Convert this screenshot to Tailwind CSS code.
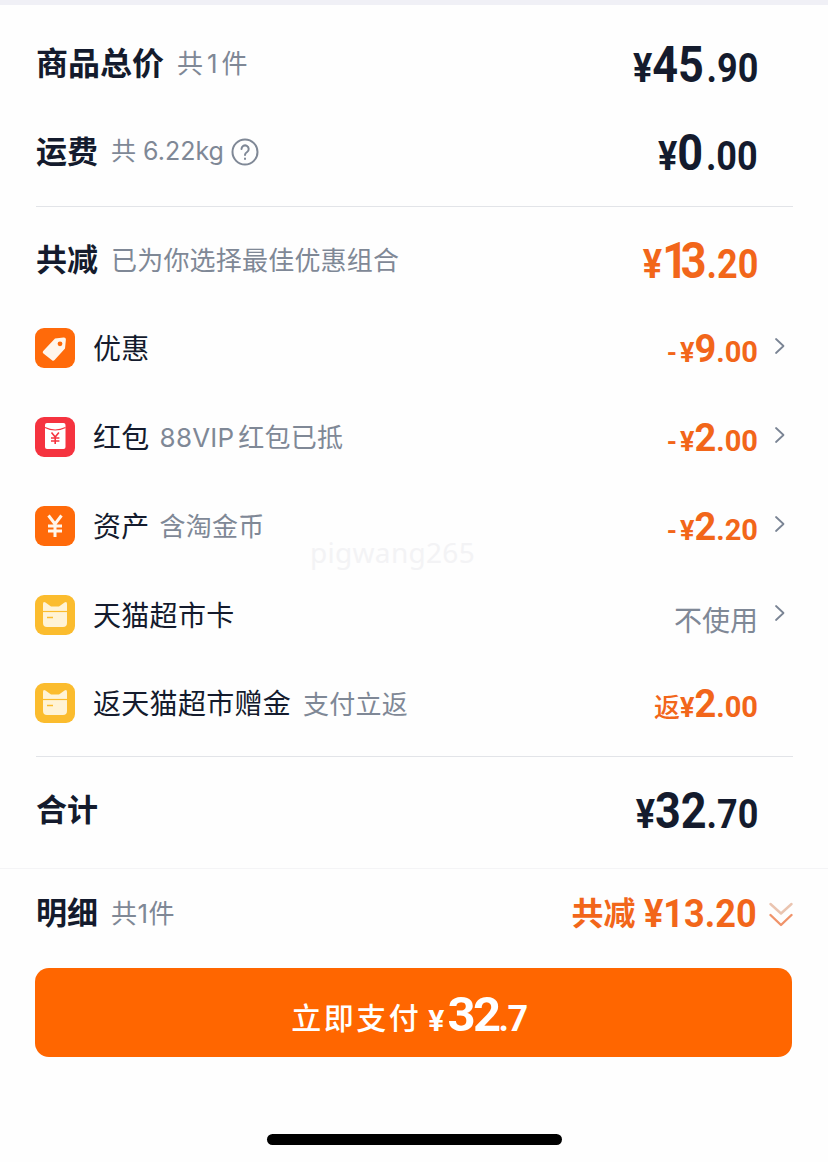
<!DOCTYPE html>
<html lang="zh">
<head>
    <meta charset="UTF-8">
    <title>订单结算</title>
    <script src="https://cdn.jsdelivr.net/npm/@tailwindcss/browser@4"></script>
</head>
<body class="bg-white font-['Inter','Noto_Sans_CJK_SC',sans-serif]">
<div class="relative w-[828px] h-[1162px] overflow-hidden bg-[#fefefe] text-[#141b2d]">
    <div class="h-[5px] bg-[#f0f0f6]"></div>

    <div class="pl-[36px] pr-[35px] pt-[16px]">
        <!-- 商品总价 -->
        <div class="flex items-center justify-between h-[88px]">
            <div class="flex items-center gap-[13px] -mt-[3px]">
                <span class="text-[32px] font-semibold">商品总价</span>
                <span class="text-[26px] text-[#7f8896]">共<span class="mx-[4px]">1</span>件</span>
            </div>
            <div class="mr-[35px] pt-[8px] flex items-baseline font-['Roboto'] font-bold origin-right scale-x-[0.9]">
                <span class="text-[40px]">¥</span><span class="text-[50px] leading-none">45</span><span class="ml-[3px] text-[40px] leading-none">.90</span>
            </div>
        </div>
        <!-- 运费 -->
        <div class="flex items-center justify-between h-[88px]">
            <div class="flex items-center gap-[13px] -mt-[2px]">
                <span class="text-[31px] font-semibold">运费</span>
                <span class="flex items-center gap-[7px] text-[25px] text-[#7f8896]">共 6.22kg
                    <svg class="w-[28px] h-[28px]" viewBox="0 0 28 28" fill="none" stroke="#7f8896" stroke-width="2" stroke-linecap="round"><circle cx="14" cy="14" r="12.500"/><path d="M10.500 11a3.600 3.600 0 1 1 5.600 3c-1.300.9-2.100 1.500-2.100 3"/><path d="M14 20.600v.3"/></svg>
                </span>
            </div>
            <div class="mr-[35px] pt-[8px] flex items-baseline font-['Roboto'] font-bold origin-right scale-x-[0.9]">
                <span class="text-[40px]">¥</span><span class="text-[50px] leading-none">0</span><span class="ml-[3px] text-[40px] leading-none">.00</span>
            </div>
        </div>

        <div class="mt-[9px] h-px bg-[#e2e4e8]"></div>

        <!-- 共减 -->
        <div class="mt-[10px] flex items-center justify-between h-[87px]">
            <div class="flex items-center gap-[13px]">
                <span class="text-[31px] font-semibold">共减</span>
                <span class="text-[26px] tracking-[0.2px] text-[#7f8896]">已为你选择最佳优惠组合</span>
            </div>
            <div class="mr-[35px] pt-[9px] flex items-baseline font-['Roboto'] font-bold text-[#f2661a] origin-right scale-x-[0.9]">
                <span class="text-[40px]">¥</span><span class="text-[50px] leading-none"><span class="tracking-[-8px]">1</span>3</span><span class="text-[40px] leading-none">.20</span>
            </div>
        </div>

        <!-- 优惠 -->
        <div class="flex items-center justify-between h-[89px]">
            <div class="flex items-center">
                <svg class="w-[40px] h-[40px] -ml-px -mt-[2px] mr-[18px]" viewBox="0 0 40 40"><rect width="40" height="40" rx="9" fill="#ff6a0a"/><path d="M20 10.500 28.600 9.500Q31 9.300 30.900 11.600L30 20.500 19.600 32Q18.400 33.300 17 32.200L8.400 25.600Q7 24.400 8.200 23Z" fill="#fff6ec"/><circle cx="25" cy="15.800" r="2.400" fill="#ff6a0a"/></svg>
                <span class="text-[28px] tracking-[0.3px]">优惠</span>
            </div>
            <div class="flex items-center text-[#f2661a]">
                <div class="pt-[6px] flex items-baseline font-['Roboto'] font-bold">
                    <span class="text-[26px] mr-[3px]">-</span><span class="text-[27px]">¥</span><span class="text-[38px] leading-none">9</span><span class="text-[29px] leading-none">.00</span>
                </div>
                <svg class="w-[12px] h-[18px] ml-[16px] mr-[7px] -mt-[6px]" viewBox="0 0 12 18" fill="none" stroke="#7a8494" stroke-width="1.800" stroke-linecap="round" stroke-linejoin="round"><path d="M2 2l7.500 7L2 16"/></svg>
            </div>
        </div>
        <!-- 红包 -->
        <div class="flex items-center justify-between h-[89px]">
            <div class="flex items-center">
                <svg class="w-[40px] h-[40px] -ml-px -mt-[2px] mr-[18px]" viewBox="0 0 40 40"><rect width="40" height="40" rx="9" fill="#f5333f"/><rect x="10" y="6" width="20.500" height="26" rx="2" fill="#fff"/><path d="M10 10.500Q20 15.500 30.500 10.500" fill="none" stroke="#f5333f" stroke-width="1.200"/><path d="M16.500 15.500l3.700 4.500 3.700-4.500M16 21h8.400M16 24h8.400M20.200 20v7" fill="none" stroke="#f5333f" stroke-width="1.600"/></svg>
                <span class="text-[28px] tracking-[0.3px]">红包</span>
                <span class="ml-[10px] text-[26px] tracking-[0.2px] text-[#7f8896]">88VIP<span class="ml-[4px]">红包已抵</span></span>
            </div>
            <div class="flex items-center text-[#f2661a]">
                <div class="pt-[6px] flex items-baseline font-['Roboto'] font-bold">
                    <span class="text-[26px] mr-[3px]">-</span><span class="text-[27px]">¥</span><span class="text-[38px] leading-none">2</span><span class="text-[29px] leading-none">.00</span>
                </div>
                <svg class="w-[12px] h-[18px] ml-[16px] mr-[7px] -mt-[6px]" viewBox="0 0 12 18" fill="none" stroke="#7a8494" stroke-width="1.800" stroke-linecap="round" stroke-linejoin="round"><path d="M2 2l7.500 7L2 16"/></svg>
            </div>
        </div>
        <!-- 资产 -->
        <div class="flex items-center justify-between h-[89px]">
            <div class="flex items-center">
                <svg class="w-[40px] h-[40px] -ml-px -mt-[2px] mr-[18px]" viewBox="0 0 40 40"><rect width="40" height="40" rx="9" fill="#ff6a0a"/><path d="M13.500 9.500 20 18l6.500-8.500M13 20h14M13 25h14M20 18v13" fill="none" stroke="#fff6ec" stroke-width="3"/></svg>
                <span class="text-[28px] tracking-[0.3px]">资产</span>
                <span class="ml-[10px] text-[26px] tracking-[0.2px] text-[#7f8896]">含淘金币</span>
            </div>
            <div class="flex items-center text-[#f2661a]">
                <div class="pt-[6px] flex items-baseline font-['Roboto'] font-bold">
                    <span class="text-[26px] mr-[3px]">-</span><span class="text-[27px]">¥</span><span class="text-[38px] leading-none">2</span><span class="text-[29px] leading-none">.20</span>
                </div>
                <svg class="w-[12px] h-[18px] ml-[16px] mr-[7px] -mt-[6px]" viewBox="0 0 12 18" fill="none" stroke="#7a8494" stroke-width="1.800" stroke-linecap="round" stroke-linejoin="round"><path d="M2 2l7.500 7L2 16"/></svg>
            </div>
        </div>
        <!-- 天猫超市卡 -->
        <div class="flex items-center justify-between h-[89px]">
            <div class="flex items-center">
                <svg class="w-[40px] h-[40px] -ml-px -mt-[2px] mr-[18px]" viewBox="0 0 40 40"><rect width="40" height="40" rx="9" fill="#fbbc2e"/><path d="M8 9Q8 6 10.500 7.500L16 11.500H24L29.500 7.500Q32 6 32 9V28Q32 32 28 32H12Q8 32 8 28Z" fill="#fff3d6"/><path d="M8 16.500H32" stroke="#fbbc2e" stroke-width="1.200"/><path d="M12 22.500H18" stroke="#fbbc2e" stroke-width="1.500"/></svg>
                <span class="text-[28px] tracking-[0.3px]">天猫超市卡</span>
            </div>
            <div class="flex items-center">
                <span class="pt-[10px] text-[28px] text-[#7f8896]">不使用</span>
                <svg class="w-[12px] h-[18px] ml-[16px] mr-[7px] -mt-[6px]" viewBox="0 0 12 18" fill="none" stroke="#7a8494" stroke-width="1.800" stroke-linecap="round" stroke-linejoin="round"><path d="M2 2l7.500 7L2 16"/></svg>
            </div>
        </div>
        <!-- 返天猫超市赠金 -->
        <div class="flex items-center justify-between h-[88px]">
            <div class="flex items-center">
                <svg class="w-[40px] h-[40px] -ml-px -mt-[2px] mr-[18px]" viewBox="0 0 40 40"><rect width="40" height="40" rx="9" fill="#fbbc2e"/><path d="M8 9Q8 6 10.500 7.500L16 11.500H24L29.500 7.500Q32 6 32 9V28Q32 32 28 32H12Q8 32 8 28Z" fill="#fff3d6"/><path d="M8 16.500H32" stroke="#fbbc2e" stroke-width="1.200"/><path d="M12 22.500H18" stroke="#fbbc2e" stroke-width="1.500"/></svg>
                <span class="text-[28px] tracking-[0.3px]">返天猫超市赠金</span>
                <span class="ml-[12px] text-[26px] tracking-[0.2px] text-[#7f8896]">支付立返</span>
            </div>
            <div class="mr-[35px] pt-[6px] flex items-baseline font-bold text-[#f2661a]">
                <span class="text-[26px] font-medium">返</span><span class="font-['Roboto'] text-[27px]">¥</span><span class="font-['Roboto'] text-[38px] leading-none">2</span><span class="font-['Roboto'] text-[29px] leading-none">.00</span>
            </div>
        </div>

        <div class="mt-[8px] h-px bg-[#e2e4e8]"></div>

        <!-- 合计 -->
        <div class="mt-[10px] flex items-center justify-between h-[88px]">
            <span class="text-[31px] font-semibold -mt-[2px]">合计</span>
            <div class="mr-[35px] pt-[8px] flex items-baseline font-['Roboto'] font-bold origin-right scale-x-[0.9]">
                <span class="text-[40px]">¥</span><span class="text-[50px] leading-none">32</span><span class="text-[40px] leading-none">.70</span>
            </div>
        </div>
    </div>

    <!-- 明细 + 支付 -->
    <div class="mt-[13px] border-t border-[#f4f4f6] pl-[36px] pr-[35px]">
        <div class="flex items-center justify-between h-[88px]">
            <div class="flex items-center gap-[13px]">
                <span class="text-[31px] font-semibold">明细</span>
                <span class="text-[26px] tracking-[0.5px] text-[#7f8896]">共1件</span>
            </div>
            <div class="flex items-center text-[#f2661a]">
                <span class="text-[32px] font-semibold mr-[3px] mt-[2px]">共减</span>
                <span class="font-['Roboto'] font-bold text-[38px] mt-[2px] origin-right scale-x-[0.95]">¥13.20</span>
                <svg class="w-[24px] h-[28px] ml-[12px] mt-[3px]" viewBox="0 0 24 28" fill="none" stroke-width="2.400" stroke-linecap="round" stroke-linejoin="round"><path d="M1.500 3l10.500 9.500L22.500 3" stroke="#eac4b0"/><path d="M1.500 14l10.500 10L22.500 14" stroke="#f0936a"/></svg>
            </div>
        </div>
        <button class="mt-[11px] -ml-px flex items-baseline justify-center w-[757px] h-[89px] pt-[22px] pr-[9px] rounded-[14px] bg-[#ff6600] text-white">
            <span class="text-[30px] font-medium tracking-[2.500px] -translate-y-[2px]">立即支付</span>
            <span class="ml-[7px] font-['Roboto'] font-bold text-[30px]">¥</span>
            <span class="ml-[3px] font-['Roboto'] font-bold text-[49px] tracking-[-2.500px] leading-none">32</span>
            <span class="font-['Roboto'] font-bold text-[36px] tracking-[-1.500px] leading-none">.7</span>
        </button>
    </div>

    <div class="mt-[77px] mx-auto w-[295px] h-[11px] rounded-full bg-black"></div>

    <!-- watermark -->
    <div class="absolute left-[310px] top-[531px] text-[28px] tracking-[0.3px] text-[#f3f3f5] font-['Noto_Sans']">pigwang265</div>
</div>
</body>
</html>
